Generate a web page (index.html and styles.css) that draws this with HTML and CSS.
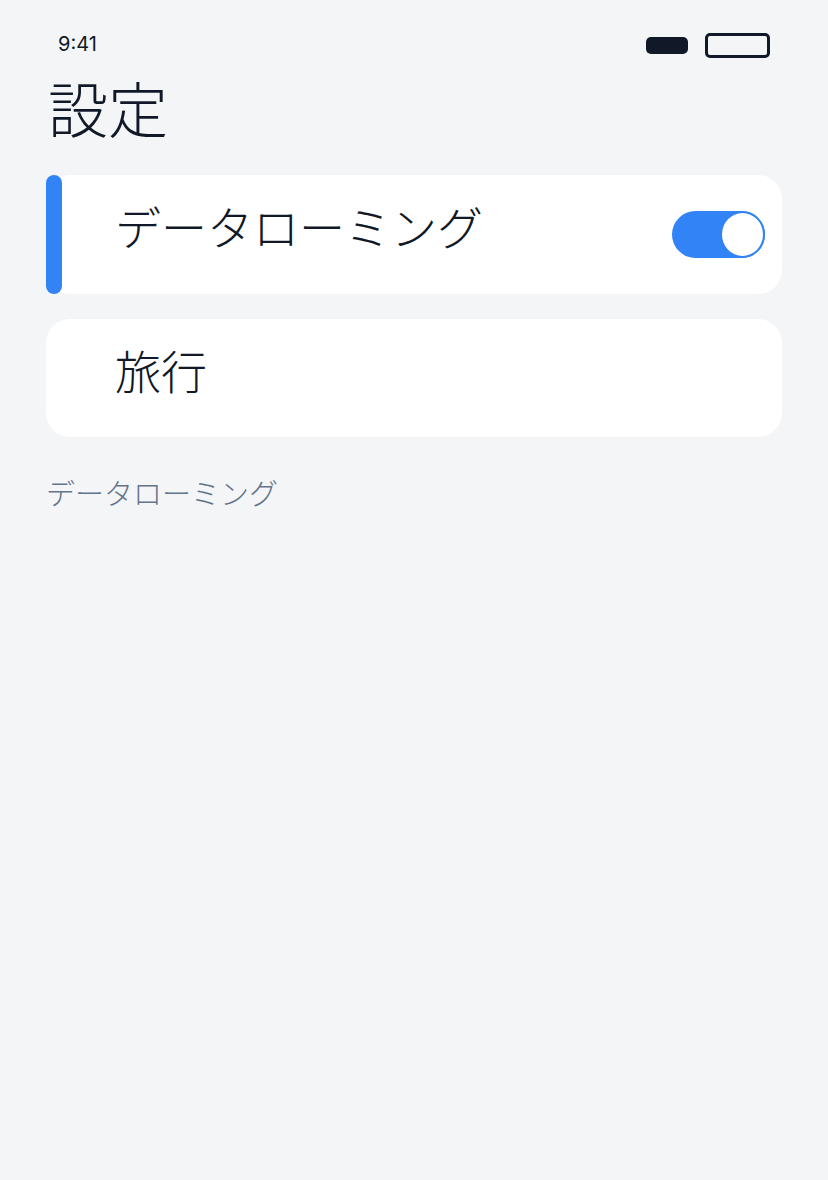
FILE: index.html
```html
<!DOCTYPE html>
<html lang="ja">
 <head>
  <meta charset="utf-8">
  <title>設定</title>
  <link rel="stylesheet" href="styles.css">
 </head>
 <body>
  <div class="status">
   <span class="time">9:41</span>
   <span class="status-icons">
    <span class="pill"></span>
    <span class="battery"></span>
   </span>
  </div>
  <h1 class="title">設定</h1>
  <div class="card active">
   <span class="bar"></span>
   <span class="label">データローミング</span>
   <span class="toggle on"><span class="knob"></span></span>
  </div>
  <div class="card">
   <span class="label">旅行</span>
  </div>
  <p class="caption">データローミング</p>
 </body>
</html>
```
FILE: styles.css
```css
body
{
 margin: 0;
 background: #f4f5f7;
 color: #111827;
 font-family: "Noto Sans CJK JP", "Noto Sans", sans-serif;
 padding: 0 46px;
}
.status
{
 display: flex;
 justify-content: space-between;
 align-items: center;
 padding: 23px 12px 0 12px;
 box-sizing: border-box;
 height: 68px;
}
.time
{
 font-family: Inter, "Liberation Sans", sans-serif;
 font-size: 20px;
 margin-top: -4px;
}
.status-icons
{
 display: flex;
 align-items: center;
 gap: 17px;
}
.pill
{
 width: 42px;
 height: 17px;
 border-radius: 5px;
 background: #111827;
}
.battery
{
 width: 65px;
 height: 25px;
 border: 3px solid #111827;
 border-radius: 5px;
 box-sizing: border-box;
}
.title
{
 margin: -11px 0 0 2px;
 font-size: 60px;
 font-weight: 300;
 line-height: 100px;
}
.card
{
 position: relative;
 display: flex;
 align-items: flex-start;
 justify-content: space-between;
 background: #fff;
 border-radius: 24px;
 height: 119px;
 box-sizing: border-box;
 padding: 17px 17px 0 69px;
 margin-top: 18px;
}
.card + .card { margin-top: 25px; height: 118px; }
.bar
{
 position: absolute;
 left: 0;
 top: 0;
 bottom: 0;
 width: 16px;
 border-radius: 8px;
 background: #3183f6;
}
.label
{
 font-size: 46px;
 font-weight: 300;
 line-height: 66px;
}
.toggle
{
 display: flex;
 justify-content: flex-end;
 align-self: center;
 width: 93px;
 height: 47px;
 border-radius: 24px;
 background: #3183f6;
 margin-top: -17px;
}
.knob
{
 width: 45px;
 height: 47px;
 border-radius: 50%;
 background: #fff;
 border: 2px solid #3183f6;
 box-sizing: border-box;
}
.caption
{
 margin: 34px 0 0 0;
 font-size: 29px;
 font-weight: 300;
 color: #64748b;
}
```
